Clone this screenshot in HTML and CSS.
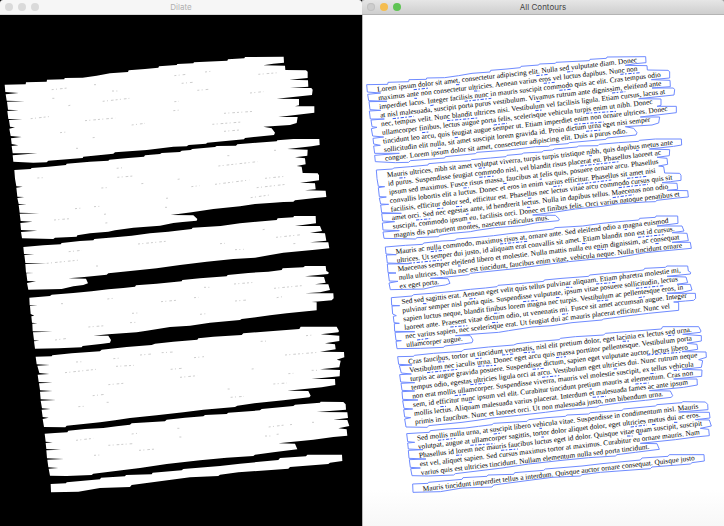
FILE: index.html
```html
<!DOCTYPE html>
<html lang="en">
<head>
<meta charset="utf-8">
<title>Contours</title>
<link rel="stylesheet" href="styles.css">
</head>
<body>
<main class="desktop">
  <section class="window window-idle" aria-labelledby="title-dilate">
    <header class="titlebar">
      <div class="controls">
        <button class="light" type="button" aria-label="Close"></button>
        <button class="light" type="button" aria-label="Minimize"></button>
        <button class="light" type="button" aria-label="Zoom"></button>
      </div>
      <h1 class="title" id="title-dilate">Dilate</h1>
    </header>
    <svg class="canvas canvas-mask" viewBox="0 0 1086 1533" role="img" aria-label="Dilate">
      <defs>
        <path id="blocks" d="M14 209L77 208 78 202 140 200 141 194 193 193 194 189 248 188 290 182 330 175 384 171 386 166 435 162 475 158 477 154 530 150 532 147 580 145 582 142 682 137 684 133 733 130 735 126 851 125 852 143 820 146 790 151 855 152 856 165 918 166 923 170 923 189 868 194 924 196 925 215 870 219 934 219 938 224 936 240 830 251 897 252 897 271 885 274 943 274 943 293 835 306 893 306 890 324 870 330 790 335 815 340 825 353 822 360 735 369 732 373 622 383 618 386 566 390 560 394 520 395 440 405 345 412 340 416 250 425 248 429 145 437 140 442 100 443 40 440 38 421 75 418 112 415 38 415 35 393 55 391 35 387 33 370 65 366 32 363 28 341 45 337 30 335 27 315 67 312 25 312 22 288 56 286 24 284 21 260 75 259 20 257 17 238 56 234 16 231Z
        M43 465L92 462 95 459 145 455 198 450 200 446 270 440 325 437 328 434 385 429 432 425 435 421 480 417 485 414 540 411 545 407 572 405 577 402 645 396 650 393 708 392 712 388 770 383 830 379 832 376 880 372 958 372 959 390 935 394 862 402 923 404 922 422 885 427 915 430 917 448 890 453 905 455 908 474 953 475 957 481 957 496 925 500 900 503 945 505 947 523 915 526 977 527 979 546 945 549 885 556 880 560 850 561 820 563 765 567 720 574 640 582 575 592 512 600 580 601 592 612 590 617 548 621 520 624 480 632 400 638 345 646 325 650 270 655 232 661 230 665 165 668 160 672 66 670 63 651 112 647 63 645 61 624 98 620 62 618 59 596 118 595 59 593 56 570 80 568 56 567 52 549 73 546 52 545 49 518 68 515 49 514 45 491Z
        M70 696L130 691 182 688 185 684 240 678 280 676 283 672 345 667 395 662 450 655 505 650 530 647 575 642 578 638 662 633 720 625 770 620 830 615 833 610 880 607 882 603 947 603 948 625 885 633 960 633 966 648 930 653 975 655 979 677 930 682 985 682 988 700 945 704 850 713 765 728 700 732 620 740 540 750 470 760 420 765 325 775 320 779 245 787 205 790 258 791 264 805 250 810 220 814 185 822 85 824 81 804 108 799 82 798 79 775 102 774 78 773 76 747 140 746 76 744 73 720 103 719 72 717Z
        M88 848L150 843 155 839 220 834 275 829 325 823 370 819 405 815 408 811 470 806 545 799 547 795 600 790 680 784 683 780 745 774 805 770 845 765 848 760 910 757 915 753 977 753 979 768 986 772 985 777 915 784 972 786 977 803 945 808 985 808 990 825 960 832 915 835 1000 835 1001 850 995 856 970 858 935 861 950 862 950 886 860 895 810 901 725 912 720 915 630 923 570 932 510 936 440 947 410 952 325 958 280 962 325 962 333 975 330 983 308 986 248 993 245 997 175 1000 105 1001 102 979 118 977 102 976 99 952 158 950 98 949 97 926 112 925 96 923 94 904 103 902 92 897 90 873 113 872 89 871Z
        M107 1025L155 1024 157 1021 215 1015 300 1009 305 1004 380 996 455 990 465 986 520 980 592 974 595 970 640 965 725 960 730 955 820 948 898 942 902 935 1010 935 1017 948 1015 952 962 958 1018 962 1018 978 975 985 1005 988 1007 1003 960 1010 1032 1011 1033 1027 1010 1034 1022 1037 1018 1057 960 1063 1020 1065 1019 1084 935 1092 1005 1092 1006 1110 965 1117 862 1127 925 1128 932 1142 928 1147 850 1156 770 1164 712 1172 705 1176 610 1184 550 1192 470 1201 390 1209 345 1216 300 1222 200 1232 196 1237 132 1236 128 1212 146 1208 128 1206 125 1184 152 1182 126 1180 122 1157 168 1155 122 1153 120 1130 158 1128 120 1126 117 1105 158 1103 116 1101 113 1079 148 1077 118 1074 112 1052 150 1050 110 1048Z
        M134 1256L165 1254 202 1252 205 1247 255 1242 310 1239 350 1234 390 1229 395 1225 495 1219 500 1214 555 1208 610 1204 615 1200 680 1197 685 1193 780 1186 785 1182 880 1173 885 1169 960 1163 962 1160 1030 1161 1037 1168 1038 1184 950 1191 1042 1192 1044 1209 1000 1214 1042 1215 1048 1233 1015 1240 1040 1243 1042 1262 1000 1266 940 1274 835 1285 885 1286 892 1303 820 1312 765 1319 760 1323 680 1328 600 1336 500 1347 420 1359 280 1376 275 1380 200 1383 150 1382 146 1361 175 1359 145 1357 142 1334 192 1332 141 1330 139 1306 183 1304 139 1302 137 1284 158 1282 137 1280Z
        M152 1407L198 1405 200 1402 300 1393 303 1388 375 1384 378 1380 455 1378 458 1373 545 1366 550 1362 660 1353 720 1346 835 1335 840 1329 918 1324 922 1319 1026 1319 1027 1338 990 1343 985 1347 870 1356 865 1361 715 1372 660 1379 655 1383 570 1387 395 1410 390 1416 300 1419 235 1430 153 1432Z"/>
        <path id="holes" d="M155 224L203 219M282 209L292 209M336 228L352 228M157 250L165 250M205 272L215 270M308 259L388 250M523 182L560 178M615 171L632 169M545 205L578 202M592 226L626 223M775 178L836 173M750 234L790 230M523 260L537 259M92 311L155 304M255 317L346 309M395 330L435 325M520 287L542 285M637 328L725 321M672 295L762 289
        M180 353L200 351M228 400L236 400M278 368L288 367M672 349L718 345M112 489L130 488M350 460L370 458M352 487L400 483M655 453L772 440M682 422L690 422M822 406L830 406M304 519L320 518M424 506L434 505M533 493L540 492M574 515L600 512M645 508L748 495M795 490L855 484M770 518L858 508M752 548L815 539M498 550L508 549M225 581L248 579M282 575L300 574M162 615L210 611M312 598L320 597M316 624L328 623M495 577L505 577
        M788 644L795 643M414 687L497 679M206 710L245 706M828 667L905 659M660 686L675 685M705 704L732 703M880 686L892 685M140 745L240 735M288 753L296 753
        M322 852L340 850M612 817L632 817M702 807L764 802M183 866L196 866M483 860L528 856M582 848L596 847M822 820L905 812M396 895L412 894M705 858L742 855M830 848L848 845M600 898L618 896M390 923L408 922M265 936L316 932M165 975L203 970
        M420 1020L455 1017M485 1013L520 1011M782 979L806 978M918 962L940 960M228 1041L250 1040M340 1031L362 1029M348 1054L402 1051M195 1073L288 1063M582 1028L612 1025M512 1063L545 1060M540 1087L592 1082M855 1020L955 1012M755 1062L768 1061M935 1066L952 1066M865 1076L880 1075M325 1109L370 1105M820 1107L860 1104M278 1142L315 1138M320 1162L330 1162M235 1175L252 1174M692 1147L732 1144M683 1122L690 1122
        M228 1276L280 1270M395 1257L420 1254M532 1240L540 1240M806 1236L855 1230M870 1229L882 1228M936 1222L948 1222M325 1291L398 1286M795 1263L812 1263M538 1266L546 1266M417 1306L468 1302M282 1321L300 1320M830 1258L842 1257"/>
      </defs>
      <use class="mask" href="#blocks"/>
      <use class="mask-holes" href="#holes"/>
    </svg>
  </section>

  <section class="window window-active" aria-labelledby="title-contours">
    <header class="titlebar">
      <div class="controls">
        <button class="light" type="button" aria-label="Close"></button>
        <button class="light light-minimize" type="button" aria-label="Minimize"></button>
        <button class="light light-zoom" type="button" aria-label="Zoom"></button>
      </div>
      <h1 class="title" id="title-contours">All Contours</h1>
    </header>
    <svg class="canvas canvas-page" viewBox="0 0 1086 1533">
      <g class="prose" transform="rotate(-6.5)">
        <text y="234">
          <tspan x="20">Lorem ipsum dolor sit amet, consectetur adipiscing elit. Nulla sed vulputate diam. Donec</tspan>
          <tspan x="20" dy="26">maximus ante non consectetur ultricies. Aenean varius eros vel luctus dapibus. Nunc non</tspan>
          <tspan x="20" dy="26">imperdiet lacus. Integer facilisis nunc in mauris suscipit commodo quis ac elit. Cras tempus odio</tspan>
          <tspan x="20" dy="26">at nisl malesuada, suscipit porta purus vestibulum. Vivamus rutrum ante dignissim, eleifend ante</tspan>
          <tspan x="20" dy="26">nec, tempus velit. Nunc blandit ultrices nisi. Vestibulum vel facilisis ligula. Etiam cursus, lacus at</tspan>
          <tspan x="20" dy="26">ullamcorper finibus, lectus augue porta felis, scelerisque vehicula turpis enim ut nibh. Donec</tspan>
          <tspan x="20" dy="26">tincidunt leo arcu, quis feugiat augue semper ut. Etiam imperdiet enim non ornare ultrices. Donec</tspan>
          <tspan x="20" dy="26">sollicitudin elit nulla, sit amet suscipit lorem gravida id. Proin dictum urna eget nisi semper</tspan>
          <tspan x="20" dy="26">congue. Lorem ipsum dolor sit amet, consectetur adipiscing elit. Duis a purus odio.</tspan>
        </text>
        <text y="492">
          <tspan x="20">Mauris ultrices, nibh sit amet volutpat viverra, turpis turpis tristique nibh, quis dapibus metus ante</tspan>
          <tspan x="20" dy="26">id purus. Suspendisse feugiat commodo nisl, vel blandit risus placerat eu. Phasellus laoreet ac</tspan>
          <tspan x="20" dy="26">ipsum sed maximus. Fusce risus massa, faucibus at felis quis, posuere ornare arcu. Phasellus</tspan>
          <tspan x="20" dy="26">convallis lobortis elit a luctus. Donec et eros in enim varius efficitur. Phasellus sit amet nisi</tspan>
          <tspan x="20" dy="26">facilisis, efficitur dolor sed, efficitur est. Phasellus nec lectus vitae arcu commodo cursus quis sit</tspan>
          <tspan x="20" dy="26">amet orci. Sed nec egestas ante, id hendrerit lectus. Nulla in dapibus tellus. Maecenas non odio</tspan>
          <tspan x="20" dy="26">suscipit, commodo ipsum eu, facilisis orci. Donec et finibus felis. Orci varius natoque penatibus et</tspan>
          <tspan x="20" dy="26">magnis dis parturient montes, nascetur ridiculus mus.</tspan>
        </text>
        <text y="724">
          <tspan x="20">Mauris ac nulla commodo, maximus risus at, ornare ante. Sed eleifend odio a magna euismod</tspan>
          <tspan x="20" dy="26">ultrices. Ut semper dui justo, id aliquam erat convallis sit amet. Etiam blandit non est id cursus.</tspan>
          <tspan x="20" dy="26">Maecenas semper eleifend libero et molestie. Nulla mattis nulla eu enim dignissim, ac consequat</tspan>
          <tspan x="20" dy="26">nulla ultrices. Nulla nec est tincidunt, faucibus enim vitae, vehicula neque. Nulla tincidunt ornare</tspan>
          <tspan x="20" dy="26">ex eget porta.</tspan>
        </text>
        <text y="875">
          <tspan x="20">Sed sed sagittis erat. Aenean eget velit quis tellus pulvinar aliquam. Etiam pharetra molestie mi,</tspan>
          <tspan x="20" dy="26">pulvinar semper nisl porta quis. Suspendisse vulputate, ipsum vitae posuere sollicitudin, lectus</tspan>
          <tspan x="20" dy="26">sapien luctus neque, blandit finibus lorem magna nec turpis. Vestibulum ac pellentesque eros, in</tspan>
          <tspan x="20" dy="26">laoreet ante. Praesent vitae dictum odio, ut venenatis mi. Fusce sit amet accumsan augue. Integer</tspan>
          <tspan x="20" dy="26">nec varius sapien, nec scelerisque erat. Ut feugiat dui ac mauris placerat efficitur. Nunc vel</tspan>
          <tspan x="20" dy="26">ullamcorper augue.</tspan>
        </text>
        <text y="1056">
          <tspan x="20">Cras faucibus, tortor ut tincidunt venenatis, nisl elit pretium dolor, eget lacinia ex lectus sed urna.</tspan>
          <tspan x="20" dy="26">Vestibulum nec iaculis urna. Donec eget arcu quis massa porttitor pellentesque. Vestibulum porta</tspan>
          <tspan x="20" dy="26">turpis ac augue gravida posuere. Suspendisse dictum, sapien eget vulputate auctor, lectus libero</tspan>
          <tspan x="20" dy="26">tempus odio, egestas ultricies ligula orci at arcu. Vestibulum eget ultricies dui. Nunc rutrum neque</tspan>
          <tspan x="20" dy="26">non erat mollis ullamcorper. Suspendisse viverra, mauris vel molestie suscipit, ex tellus vehicula</tspan>
          <tspan x="20" dy="26">sem, id efficitur nunc ipsum vel elit. Curabitur tincidunt pretium mauris at elementum. Cras non</tspan>
          <tspan x="20" dy="26">mollis lectus. Aliquam malesuada varius placerat. Interdum et malesuada fames ac ante ipsum</tspan>
          <tspan x="20" dy="26">primis in faucibus. Nunc et laoreet orci. Ut non malesuada justo, non bibendum urna.</tspan>
        </text>
        <text y="1287">
          <tspan x="20">Sed mollis nulla urna, at suscipit libero vehicula vitae. Suspendisse in condimentum nisl. Mauris</tspan>
          <tspan x="20" dy="26">volutpat, augue at ullamcorper sagittis, tortor dolor aliquet dolor, eget ultricies metus dui ac eros.</tspan>
          <tspan x="20" dy="26">Phasellus id lorem nec mauris faucibus luctus eget id dolor. Quisque vitae quam suscipit, suscipit</tspan>
          <tspan x="20" dy="26">est vel, aliquet sapien. Sed cursus maximus tortor at maximus. Curabitur eu ornare mauris. Nam</tspan>
          <tspan x="20" dy="26">varius quis est ultricies tincidunt. Nullam elementum nulla sed porta tincidunt.</tspan>
        </text>
        <text y="1440">
          <tspan x="20">Mauris tincidunt imperdiet tellus a interdum. Quisque auctor ornare consequat. Quisque justo</tspan>
        </text>
      </g>
      <use class="contour" href="#blocks"/>
      <use class="contour contour-holes" href="#holes"/>
    </svg>
  </section>
</main>
</body>
</html>
```
FILE: styles.css
```css
* {
  box-sizing: border-box;
}

body {
  margin: 0;
  background: #000;
  font-family: Inter, "Liberation Sans", sans-serif;
}

.desktop {
  display: grid;
  grid-template-columns: 1fr 1fr;
  min-height: 100vh;
}

.window {
  display: flex;
  flex-direction: column;
  min-width: 0;
}

.titlebar {
  display: grid;
  grid-template-columns: 1fr auto 1fr;
  align-items: center;
  height: 15px;
  padding: 0 5px;
  border-bottom: 1px solid #d8d8d8;
  border-radius: 3px 3px 0 0;
  background: #f6f6f6;
}

.window-active {
  background: #999;
}

.window-active .titlebar {
  border-bottom-color: #b4b4b4;
  background: linear-gradient(#e6e6e6, #cecece);
}

.controls {
  display: flex;
  gap: 5px;
}

.light {
  width: 8px;
  height: 8px;
  padding: 0;
  border: 0;
  border-radius: 50%;
  background: #dadada;
}

.window-active .light {
  background: #cdcdcd;
  box-shadow: inset 0 0 0 1px #c2c2c2;
}

.window-active .light-minimize {
  background: #f5bd4f;
  box-shadow: none;
}

.window-active .light-zoom {
  background: #5fc454;
  box-shadow: none;
}

.title {
  margin: 0;
  color: #b0b0b0;
  font-size: 8px;
  font-weight: 400;
  line-height: 14px;
}

.window-active .title {
  color: #444;
}

.canvas {
  display: block;
  width: 100%;
  height: auto;
}

.canvas-mask {
  background: #000;
}

.canvas-page {
  background: linear-gradient(#fff 93%, #f7f7f7);
  box-shadow: inset 1px 0 #b8b8b8;
}

.mask {
  fill: #fff;
}

.mask-holes {
  fill: none;
  stroke: #b4b4b4;
  stroke-width: 2;
  stroke-dasharray: 6 7 3 9 8 6;
}

.contour {
  fill: none;
  stroke: #6f8bff;
  stroke-width: 3;
}

.contour-holes {
  stroke: #3558f5;
  stroke-dasharray: 10 4 5 5;
}

.prose {
  fill: #000;
  font-family: "Liberation Serif", serif;
  font-size: 22px;
}
```
